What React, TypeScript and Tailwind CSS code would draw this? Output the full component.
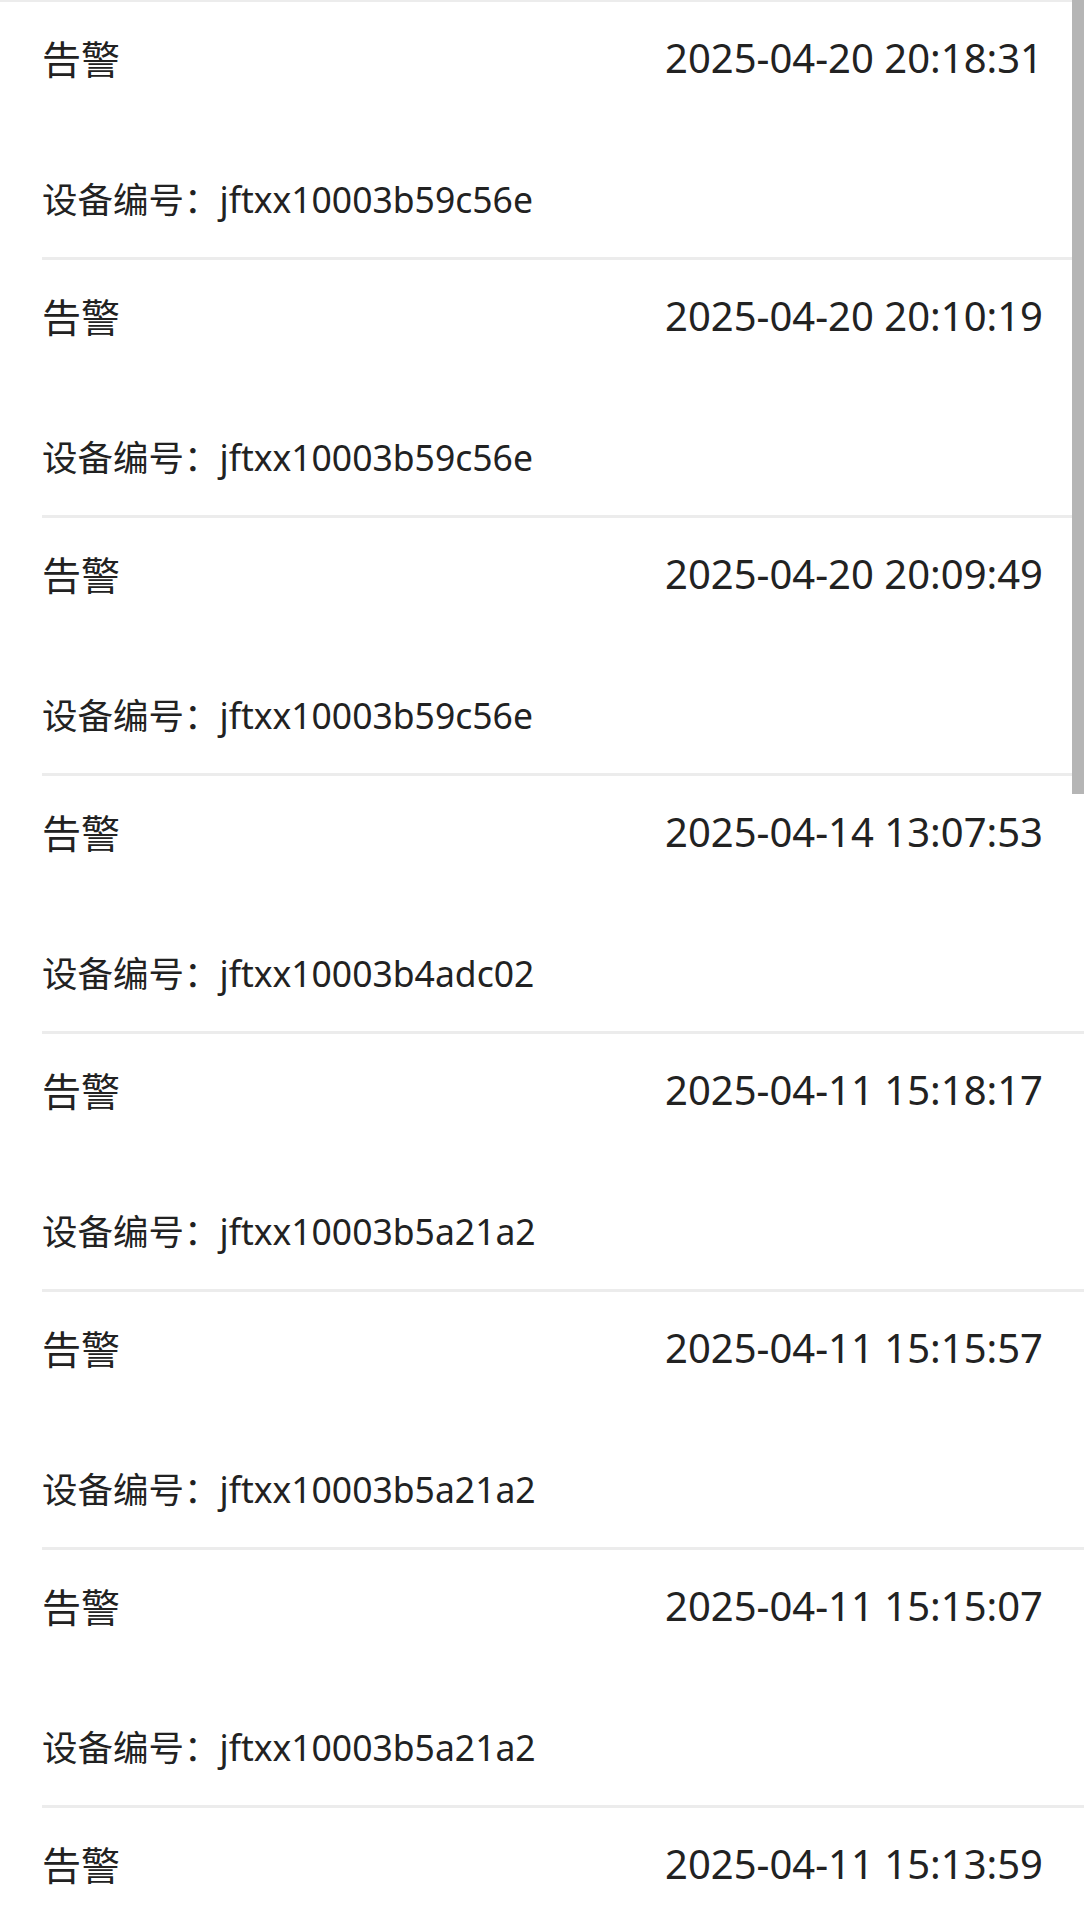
const ALERTS = [
  { time: '2025-04-20 20:18:31', device: 'jftxx10003b59c56e' },
  { time: '2025-04-20 20:10:19', device: 'jftxx10003b59c56e' },
  { time: '2025-04-20 20:09:49', device: 'jftxx10003b59c56e' },
  { time: '2025-04-14 13:07:53', device: 'jftxx10003b4adc02' },
  { time: '2025-04-11 15:18:17', device: 'jftxx10003b5a21a2' },
  { time: '2025-04-11 15:15:57', device: 'jftxx10003b5a21a2' },
  { time: '2025-04-11 15:15:07', device: 'jftxx10003b5a21a2' },
  { time: '2025-04-11 15:13:59', device: 'jftxx10003b5a21a2' },
];

export default function App() {
  return (
    <div
      className="relative h-[1927px] overflow-hidden bg-white text-[#222222]"
      style={{ fontFamily: '"Noto Sans", "Noto Sans CJK SC", sans-serif' }}
    >
      <div className="border-t-2 border-[#ececec]">
        {ALERTS.map((a, i) => (
          <div key={i} className="ml-[42px] h-[258px] border-b-[3px] border-[#ececec] pr-[41px] pt-[32px]">
            <div className="flex h-12 items-center justify-between">
              <span className="text-[39px] leading-none">告警</span>
              <span className="text-[40px] leading-none">{a.time}</span>
            </div>
            <div className="mt-[98px] flex h-10 items-center text-[35.5px] leading-none">
              <span>设备编号：</span>
              <span>{a.device}</span>
            </div>
          </div>
        ))}
      </div>

      {/* scrollbar */}
      <div className="absolute right-0 top-0 h-[794px] w-[12px] bg-[#b5b5b5]" />
    </div>
  );
}
